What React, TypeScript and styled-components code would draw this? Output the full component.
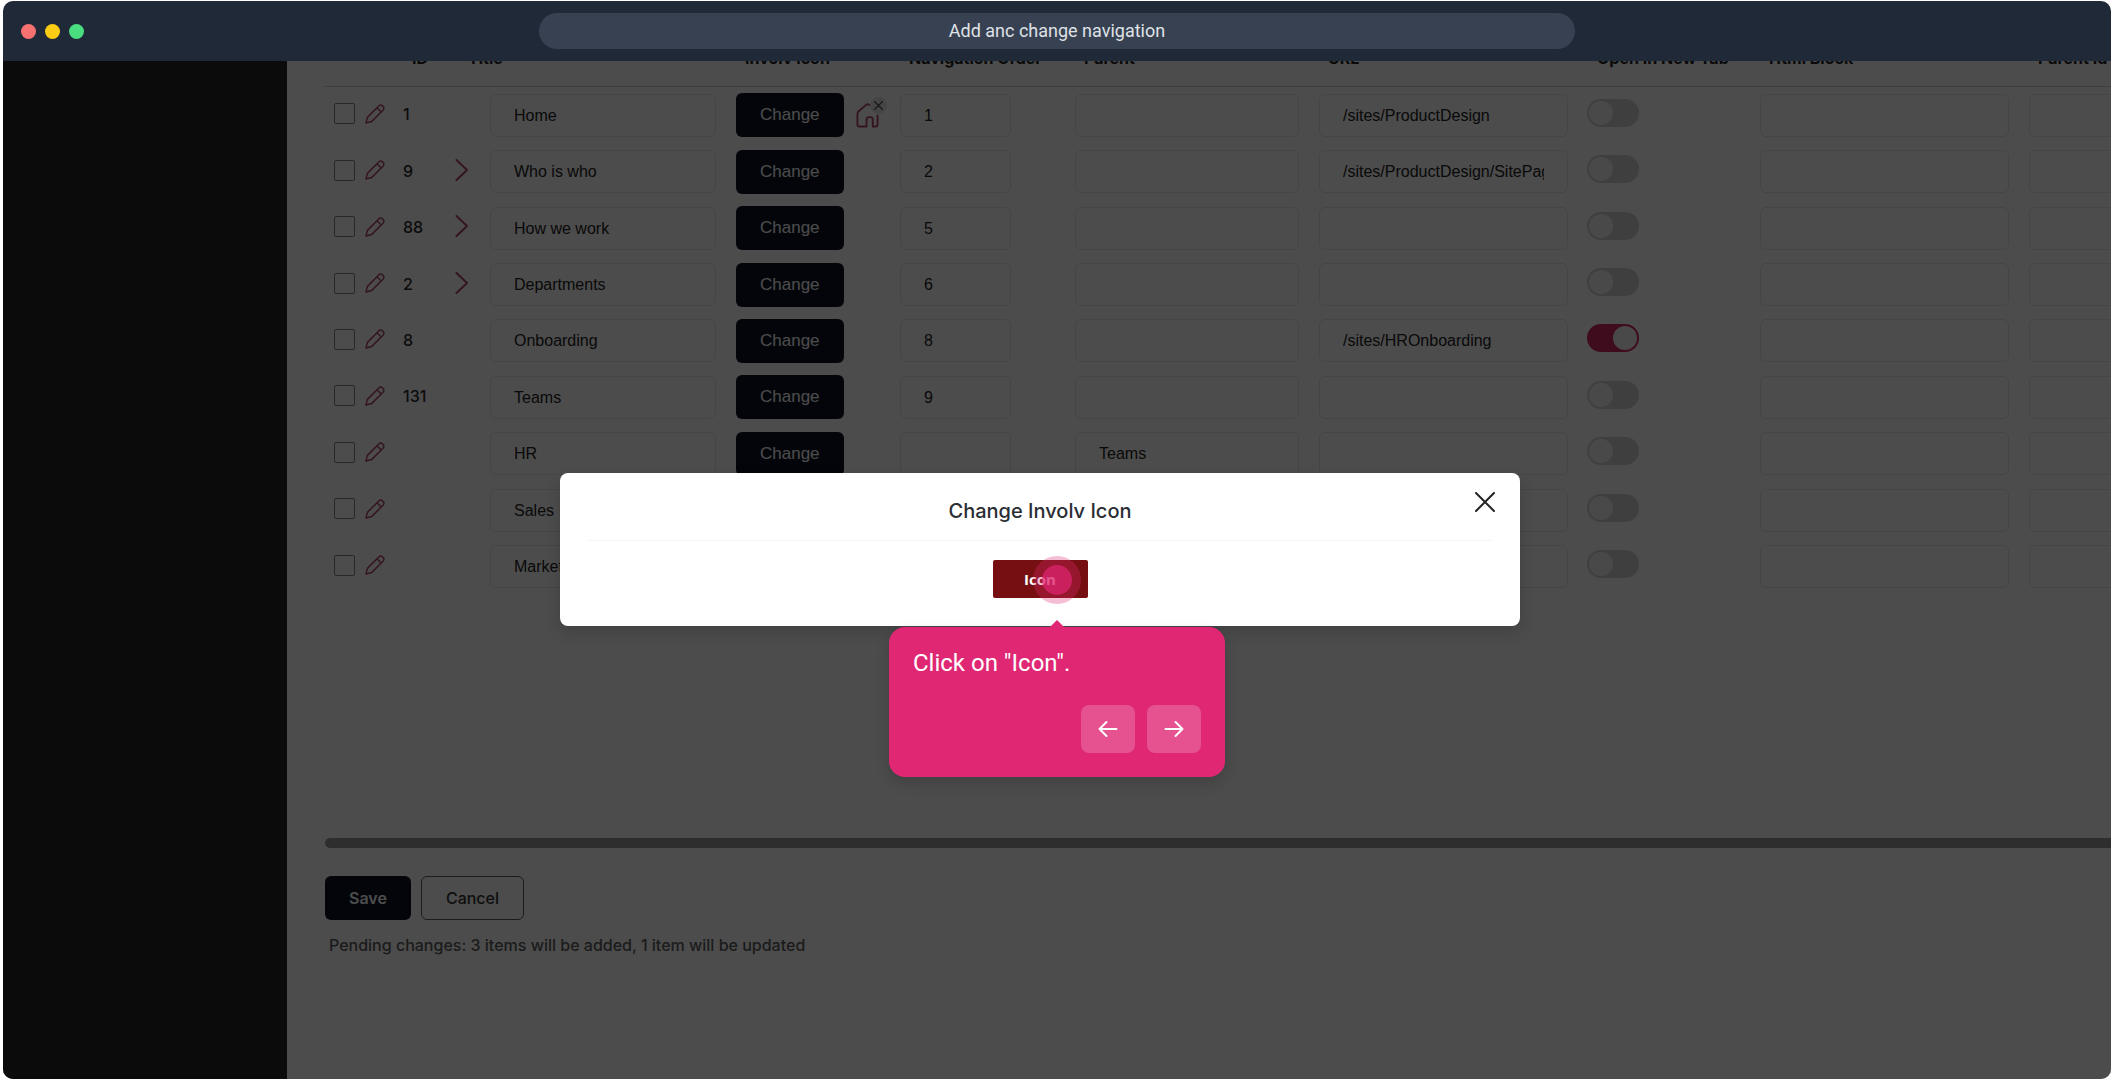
import React from "react";
import styled, { createGlobalStyle } from "styled-components";

const GlobalStyle = createGlobalStyle`
  *, *::before, *::after { box-sizing: border-box; }
  body { margin: 0; background: #fff; font-family: Inter, "Liberation Sans", sans-serif; }
  button, input { font-family: inherit; margin: 0; }
`;

const Frame = styled.div`
  height: 100vh;
  padding: 1px 3px;
`;

const Window = styled.div`
  height: 100%;
  display: flex;
  flex-direction: column;
  border-radius: 10px;
  overflow: hidden;
  background: #1f2937;
`;

const TitleBar = styled.header`
  flex: none;
  height: 60px;
  display: grid;
  grid-template-columns: 1fr 1036px 1fr;
  align-items: center;
  padding: 0 18px;
`;

const Lights = styled.div`
  display: flex;
  gap: 9px;
`;

const Light = styled.span<{ $color: string }>`
  width: 15px;
  height: 15px;
  border-radius: 50%;
  background: ${(p) => p.$color};
`;

const Address = styled.div`
  height: 36px;
  border-radius: 18px;
  background: #384152;
  color: #dfe2e7;
  font: 400 18px/36px Roboto, sans-serif;
  text-align: center;
`;

const Stage = styled.div`
  position: relative;
  flex: 1;
  min-height: 0;
  display: flex;
  overflow: hidden;
  background: #fff;
`;

const Sidebar = styled.nav`
  flex: none;
  width: 284px;
  background: #252525;
`;

const Main = styled.main`
  flex: 1;
  min-width: 0;
  padding-left: 37px;
  overflow: hidden;
`;

const TableArea = styled.div`
  margin-top: -34px;
  height: 811px;
  overflow: hidden;
`;

const Table = styled.table`
  table-layout: fixed;
  width: 1939px;
  height: 568px;
  border-collapse: separate;
  border-spacing: 0;
  font-size: 16px;
  font-weight: 500;
  color: #2b2b2b;
`;

const Head = styled.th`
  height: 60px;
  padding: 2px 0 0 19px;
  border-bottom: 1px solid #cfcfcf;
  text-align: left;
  font-weight: 700;
  font-size: 16px;
  line-height: 20px;
  white-space: nowrap;
  color: #222;
`;

const TitleHead = styled(Head)`
  padding-left: 16px;
`;

const Cell = styled.td`
  padding: 0 10px;
  vertical-align: middle;
`;

const SelectCell = styled(Cell)`
  padding: 0 0 3px 10px;
`;

const IdCell = styled(Cell)`
  padding-bottom: 2px;
`;

const ChevronCell = styled(Cell)`
  padding: 0 4px 4px 3px;
`;

const SwitchCell = styled(Cell)`
  padding: 0 9px 5px;
`;

const Inline = styled.div<{ $gap: number }>`
  display: flex;
  align-items: center;
  gap: ${(p) => p.$gap}px;
`;

const Check = styled.input`
  appearance: none;
  flex: none;
  width: 21px;
  height: 21px;
  border: 1px solid #858585;
  border-radius: 2px;
`;

const IconButton = styled.button`
  position: relative;
  display: block;
  padding: 0;
  border: 0;
  background: none;
  color: #b04866;
  line-height: 0;
`;

const Field = styled.input`
  display: block;
  width: 100%;
  height: 43px;
  padding: 1px 23px 0;
  border: 1px solid #e8e8e8;
  border-radius: 6px;
  background: transparent;
  color: #222;
  font: 400 16px/20px "Liberation Sans", Arial, sans-serif;
`;

const OrderField = styled(Field)`
  width: 111px;
`;

const DarkButton = styled.button`
  height: 44px;
  padding: 0 24px;
  border: 0;
  border-radius: 6px;
  background: #0d1322;
  color: #fff;
  font: 400 17px/20px "Liberation Sans", Arial, sans-serif;
`;

const SaveButton = styled(DarkButton)`
  font: 600 16px/20px Inter, sans-serif;
`;

const OutlineButton = styled(DarkButton)`
  border: 1px solid #606060;
  background: transparent;
  color: #333;
  font: 500 16px/20px Inter, sans-serif;
`;

const Remove = styled.span`
  position: absolute;
  top: -6px;
  right: -8px;
  width: 17px;
  height: 17px;
  border-radius: 50%;
  background: #e6e6e6;
  color: #555;
  display: grid;
  place-items: center;
`;

const Switch = styled.input`
  appearance: none;
  display: block;
  width: 52px;
  height: 28px;
  padding: 2px;
  border-radius: 14px;
  background: #d4d4d4;
  &::before {
    content: "";
    display: block;
    width: 24px;
    height: 24px;
    border-radius: 50%;
    background: #f6f6f6;
  }
  &:checked { background: #d02a62; }
  &:checked::before { margin-left: auto; }
`;

const ScrollBar = styled.div`
  height: 10px;
  margin-left: 1px;
  border-radius: 5px 0 0 5px;
  background: #999;
`;

const Actions = styled.div`
  display: flex;
  gap: 10px;
  padding: 28px 0 13px 1px;
`;

const Pending = styled.p`
  margin: 0;
  padding-left: 5px;
  font-size: 16px;
  font-weight: 500;
  line-height: 24px;
  color: #5c5c5c;
`;

const Overlay = styled.div`
  position: absolute;
  inset: 0;
  display: flex;
  align-items: flex-start;
  justify-content: center;
  padding: 412px 34px 0 0;
  background: rgba(0, 0, 0, 0.7);
`;

const Modal = styled.section`
  position: relative;
  width: 960px;
  height: 153px;
  padding: 0 28px;
  display: flex;
  flex-direction: column;
  align-items: center;
  border-radius: 8px;
  background: #fff;
  box-shadow: 0 6px 16px rgba(0, 0, 0, 0.15);
`;

const ModalTitle = styled.h2`
  width: 100%;
  height: 68px;
  margin: 0 0 19px;
  padding-top: 9px;
  border-bottom: 1px solid #f6f6f6;
  font-size: 20px;
  font-weight: 500;
  line-height: 58px;
  text-align: center;
  color: #2a2d34;
`;

const Close = styled(IconButton)`
  position: absolute;
  top: 19px;
  right: 25px;
  color: #222;
`;

const PickButton = styled.button`
  width: 95px;
  height: 38px;
  padding: 0;
  border: 0;
  border-radius: 2px;
  background: #760f11;
  color: #fff;
  font: 700 15px/20px "Open Sans", sans-serif;
`;

const Hotspot = styled.span`
  position: absolute;
  top: 495px;
  left: 50%;
  width: 48px;
  height: 48px;
  margin-left: -24px;
  border-radius: 50%;
  background: rgba(224, 39, 116, 0.3);
  display: grid;
  place-items: center;
  &::before {
    content: "";
    width: 30px;
    height: 30px;
    border-radius: 50%;
    background: rgba(224, 39, 116, 0.7);
  }
`;

const Tip = styled.aside`
  position: absolute;
  top: 566px;
  left: 50%;
  width: 336px;
  margin-left: -168px;
  padding: 20px 24px 24px;
  border-radius: 16px;
  background: #e02774;
  color: #fff;
  box-shadow: 0 6px 14px rgba(0, 0, 0, 0.15);
  &::before {
    content: "";
    position: absolute;
    top: -7px;
    left: 50%;
    margin-left: -7px;
    border: solid transparent;
    border-width: 0 7px 7px;
    border-bottom-color: #e02774;
  }
`;

const TipText = styled.p`
  margin: 0 0 26px;
  font: 400 24px/32px Roboto, sans-serif;
`;

const TipNav = styled.div`
  display: flex;
  justify-content: flex-end;
  gap: 12px;
`;

const TipButton = styled.button`
  width: 54px;
  height: 48px;
  padding: 0;
  border: 0;
  border-radius: 8px;
  background: rgba(255, 255, 255, 0.2);
  color: #fff;
  display: grid;
  place-items: center;
`;

const Stroke = ({ w, h, box, d, sw = 1 }: { w: number; h: number; box: string; d: string; sw?: number }) => (
  <svg width={w} height={h} viewBox={box} fill="none" stroke="currentColor" strokeWidth={sw} strokeLinecap="round" strokeLinejoin="round" aria-hidden="true">
    <path d={d} />
  </svg>
);

const Pencil = () => (
  <Stroke w={20} h={20} box="0 0 20 20" sw={1.5} d="M1 19l1.4-5.6L14 1.8a2.4 2.4 0 0 1 3.4 0l.8.8a2.4 2.4 0 0 1 0 3.4L6.6 17.6 1 19zM12 3.8L16.2 8" />
);
const Chevron = () => <Stroke w={14} h={22} box="0 0 14 22" sw={2} d="M1.5 1L12 11 1.5 21" />;
const House = () => (
  <Stroke w={23} h={25} box="0 0 24 26" sw={2} d="M22.5 13v9.5a2 2 0 0 1-2 2h-3v-7.300a2.500 2.500 0 0 0-2.500-2.500h-1.500a2.500 2.500 0 0 0-2.500 2.500v7.300H3.500a2 2 0 0 1-2-2v-11a4 4 0 0 1 1.200-2.900L10.600 1.900q1.600-1.400 3.200 0" />
);
const Cross = ({ size, sw }: { size: number; sw: number }) => (
  <Stroke w={size} h={size} box="0 0 20 20" sw={sw} d="M1 1l18 18M19 1L1 19" />
);

type Row = { id: string; title: string; order: string; parent: string; url: string; children?: boolean; house?: boolean; newTab?: boolean };

const rows: Row[] = [
  { id: "1", title: "Home", order: "1", parent: "", url: "/sites/ProductDesign", house: true },
  { id: "9", title: "Who is who", order: "2", parent: "", url: "/sites/ProductDesign/SitePages", children: true },
  { id: "88", title: "How we work", order: "5", parent: "", url: "", children: true },
  { id: "2", title: "Departments", order: "6", parent: "", url: "", children: true },
  { id: "8", title: "Onboarding", order: "8", parent: "", url: "/sites/HROnboarding", newTab: true },
  { id: "131", title: "Teams", order: "9", parent: "", url: "" },
  { id: "", title: "HR", order: "", parent: "Teams", url: "" },
  { id: "", title: "Sales", order: "", parent: "", url: "" },
  { id: "", title: "Marketing", order: "", parent: "", url: "" },
];

const columns = [69, 59, 28, 246, 164, 175, 244, 269, 172, 269, 244];

export default function App() {
  return (
    <Frame>
      <GlobalStyle />
      <Window>
        <TitleBar>
          <Lights>
            <Light $color="#f87171" />
            <Light $color="#facc15" />
            <Light $color="#4ade80" />
          </Lights>
          <Address>Add anc change navigation</Address>
        </TitleBar>
        <Stage>
          <Sidebar />
          <Main>
            <TableArea>
              <Table>
                <colgroup>
                  {columns.map((width, i) => (
                    <col key={i} width={width} />
                  ))}
                </colgroup>
                <thead>
                  <tr>
                    <Head />
                    <Head>ID</Head>
                    <TitleHead colSpan={2}>Title</TitleHead>
                    <Head>Involv Icon</Head>
                    <Head>Navigation Order</Head>
                    <Head>Parent</Head>
                    <Head>URL</Head>
                    <Head>Open In New Tab</Head>
                    <Head>Html Block</Head>
                    <Head>Parent Id</Head>
                  </tr>
                </thead>
                <tbody>
                  {rows.map((row) => (
                    <tr key={row.title}>
                      <SelectCell>
                        <Inline $gap={10}>
                          <Check type="checkbox" aria-label={`Select ${row.title}`} />
                          <IconButton type="button" aria-label={`Edit ${row.title}`}>
                            <Pencil />
                          </IconButton>
                        </Inline>
                      </SelectCell>
                      <IdCell>{row.id}</IdCell>
                      <ChevronCell>
                        {row.children && (
                          <IconButton type="button" aria-label={`Expand ${row.title}`}>
                            <Chevron />
                          </IconButton>
                        )}
                      </ChevronCell>
                      <Cell>
                        <Field aria-label="Title" defaultValue={row.title} />
                      </Cell>
                      <Cell>
                        <Inline $gap={12}>
                          <DarkButton type="button">Change</DarkButton>
                          {row.house && (
                            <IconButton type="button" aria-label="Remove icon">
                              <House />
                              <Remove>
                                <Cross size={9} sw={3} />
                              </Remove>
                            </IconButton>
                          )}
                        </Inline>
                      </Cell>
                      <Cell>
                        <OrderField aria-label="Navigation order" defaultValue={row.order} />
                      </Cell>
                      <Cell>
                        <Field aria-label="Parent" defaultValue={row.parent} />
                      </Cell>
                      <Cell>
                        <Field aria-label="URL" defaultValue={row.url} />
                      </Cell>
                      <SwitchCell>
                        <Switch type="checkbox" role="switch" aria-label="Open in new tab" defaultChecked={row.newTab} />
                      </SwitchCell>
                      <Cell>
                        <Field aria-label="Html block" />
                      </Cell>
                      <Cell>
                        <Field aria-label="Parent id" />
                      </Cell>
                    </tr>
                  ))}
                </tbody>
              </Table>
            </TableArea>
            <ScrollBar />
            <Actions>
              <SaveButton type="button">Save</SaveButton>
              <OutlineButton type="button">Cancel</OutlineButton>
            </Actions>
            <Pending>Pending changes: 3 items will be added, 1 item will be updated</Pending>
          </Main>
          <Overlay>
            <Modal role="dialog" aria-label="Change Involv Icon">
              <ModalTitle>Change Involv Icon</ModalTitle>
              <PickButton type="button">Icon</PickButton>
              <Close type="button" aria-label="Close">
                <Cross size={20} sw={2} />
              </Close>
            </Modal>
            <Hotspot />
            <Tip>
              <TipText>Click on "Icon".</TipText>
              <TipNav>
                <TipButton type="button" aria-label="Previous">
                  <Stroke w={20} h={18} box="0 0 20 18" sw={2} d="M18.500 9H1.500M8.500 2l-7 7 7 7" />
                </TipButton>
                <TipButton type="button" aria-label="Next">
                  <Stroke w={20} h={18} box="0 0 20 18" sw={2} d="M1.500 9h17M11.500 2l7 7-7 7" />
                </TipButton>
              </TipNav>
            </Tip>
          </Overlay>
        </Stage>
      </Window>
    </Frame>
  );
}
